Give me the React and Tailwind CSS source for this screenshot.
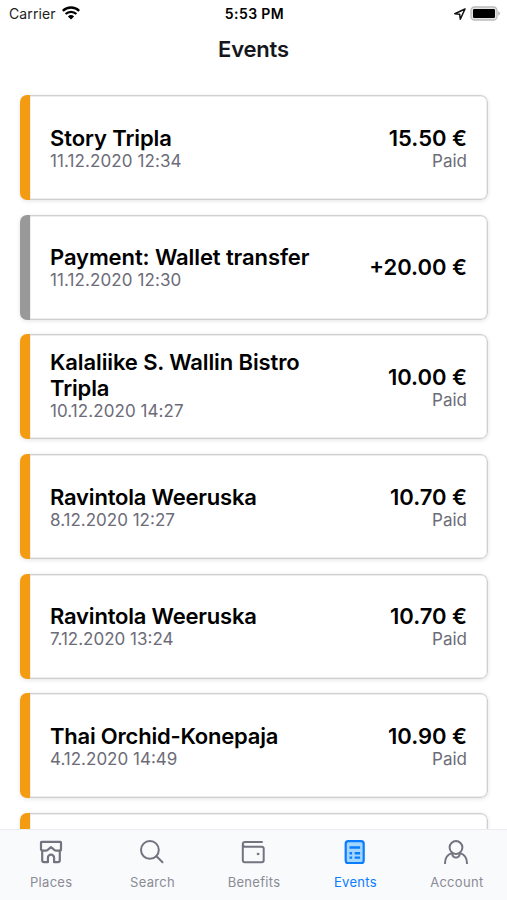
import React from 'react';
import clsx from 'clsx';

const events = [
  { id: 1, title: 'Story Tripla', date: '11.12.2020 12:34', amount: '15.50 €', status: 'Paid', tracking: 'tracking-[-0.1px]', dateTracking: 'tracking-[0.1px]' },
  { id: 2, title: 'Payment: Wallet transfer', date: '11.12.2020 12:30', amount: '+20.00 €', transfer: true, tracking: 'tracking-[-0.1px]', dateTracking: 'tracking-[0.1px]' },
  { id: 3, title: 'Kalaliike S. Wallin Bistro Tripla', date: '10.12.2020 14:27', amount: '10.00 €', status: 'Paid', tall: true, tracking: 'tracking-[-0.12px]', dateTracking: 'tracking-[0.07px]' },
  { id: 4, title: 'Ravintola Weeruska', date: '8.12.2020 12:27', amount: '10.70 €', status: 'Paid', tracking: 'tracking-[-0.2px]' },
  { id: 5, title: 'Ravintola Weeruska', date: '7.12.2020 13:24', amount: '10.70 €', status: 'Paid', tracking: 'tracking-[-0.2px]' },
  { id: 6, title: 'Thai Orchid-Konepaja', date: '4.12.2020 14:49', amount: '10.90 €', status: 'Paid', tracking: 'tracking-[-0.22px]' },
  { id: 7, title: '', date: '', amount: '' },
];

const PlacesIcon = () => (
  <svg className="h-6 w-6" viewBox="0 0 24 24" fill="none" stroke="currentColor" strokeWidth={2.2} strokeLinejoin="round" strokeLinecap="round">
    <path d="M2.600 1.800h18.800a.6.6 0 0 1 .6.6v6.800a1.500 1.500 0 0 1-1.500 1.500H17a2 2 0 0 1-1.400-.6L12 7.200l-3.600 2.900a2 2 0 0 1-1.400.6H3.500A1.500 1.500 0 0 1 2 9.200V2.400a.6.6 0 0 1 .6-.6z" />
    <path d="M3.200 10.700v9.600a1.900 1.900 0 0 0 1.900 1.900h3.800v-4.400a3.100 3.100 0 0 1 6.200 0v4.400h3.800a1.900 1.900 0 0 0 1.900-1.900v-9.600" />
  </svg>
);

const SearchIcon = () => (
  <svg className="h-6 w-6" viewBox="0 0 24 24" fill="none" stroke="currentColor" strokeWidth={2} strokeLinecap="round">
    <circle cx="9.900" cy="9.900" r="8.900" />
    <path d="M16.500 16.300l6 5.900" />
  </svg>
);

const BenefitsIcon = () => (
  <svg className="h-6 w-6" viewBox="0 0 24 24" fill="none" stroke="currentColor" strokeWidth={2} strokeLinecap="round" strokeLinejoin="round">
    <path d="M21 1.900H4.200a2.400 2.400 0 0 0 0 4.800h16.500a2 2 0 0 1 2 2V20.300a2 2 0 0 1-2 2H3.800a2 2 0 0 1-2-2V4.300" />
    <circle cx="17" cy="14" r="0.900" fill="currentColor" strokeWidth={1} />
  </svg>
);

const EventsIcon = () => (
  <svg className="h-6 w-6" viewBox="0 0 24 24" fill="none" stroke="currentColor" strokeWidth={2.2}>
    <rect x="2.700" y="1.200" width="18" height="22" rx="2.600" fill="#a3d6ff" />
    <path d="M6.500 7.500h10.600M6.500 13.300h2.600M11.700 13.300h5.400M6.500 17.600h2.600M11.700 17.600h5.400" strokeWidth={2.400} />
  </svg>
);

const AccountIcon = () => (
  <svg className="h-6 w-6" viewBox="0 0 24 24" fill="none" stroke="currentColor" strokeWidth={2} strokeLinecap="round">
    <circle cx="12" cy="7.500" r="6.400" />
    <path d="M1 23.300c0-5 2.500-8.900 7-10.200.4 2.800 2 4.500 4 4.500s3.600-1.700 4-4.500c4.500 1.300 7 5.200 7 10.200" />
  </svg>
);

const tabs = [
  { label: 'Places', Icon: PlacesIcon },
  { label: 'Search', Icon: SearchIcon },
  { label: 'Benefits', Icon: BenefitsIcon },
  { label: 'Events', Icon: EventsIcon, active: true },
  { label: 'Account', Icon: AccountIcon },
];

const StatusBar = () => (
  <div className="grid h-7 grid-cols-3 items-center pl-[9px] pr-[7px] text-[14px] leading-7 text-black">
    <div className="flex items-center gap-[6px]">
      <span className="tracking-[0.1px] text-[#222]">Carrier</span>
      <svg className="-mt-[2px] h-[14px] w-[18px]" viewBox="0 0 18 14" fill="none" stroke="black" strokeWidth={2.300}>
        <path d="M.800 4.800a11.800 11.800 0 0 1 16.400 0M3.600 8a7.700 7.700 0 0 1 10.800 0" />
        <path d="M9 13.600L5.900 10.400a4.500 4.500 0 0 1 6.200 0z" fill="black" stroke="none" />
      </svg>
    </div>
    <span className="text-center font-semibold tracking-[0.4px]">5:53 PM</span>
    <div className="flex items-center justify-end gap-[4px]">
      <svg className="-mt-px h-3 w-3" viewBox="0 0 12 12" fill="none" stroke="#111" strokeWidth={1.500} strokeLinejoin="round">
        <path d="M11 1L.800 5.700l4.900.600.600 4.900z" />
      </svg>
      <svg className="-mt-[2px] h-[15px] w-[30px]" viewBox="0 0 30 15">
        <rect x="1" y="1" width="26" height="13" rx="3.500" fill="#e4e4e4" stroke="#bbb" strokeWidth={1.300} />
        <rect x="3" y="3" width="22" height="9" rx="1.200" fill="#000" />
        <path d="M28.300 5.300c2 .700 2 3.700 0 4.400z" fill="#aaa" />
      </svg>
    </div>
  </div>
);

const EventCard = ({ event }) => (
  <div className="flex h-[105px] shrink-0 overflow-hidden rounded-[7px] bg-white shadow-[0_1px_4px_rgba(0,0,0,0.11)]">
    <div className={clsx('w-[10px] shrink-0', event.transfer ? 'bg-[#999999]' : 'bg-[#f39c12]')} />
    <div className="flex min-w-0 flex-1 items-center justify-between rounded-r-[7px] border border-l-0 border-[#d0d0d3] pl-5 pr-[20px] shadow-[inset_0_0_0_0.5px_#dcdcdf]">
      <div className={clsx('w-[270px] pt-px', event.tall && 'pb-[3px]')}>
        <h2 className={clsx('-mt-px text-[22px] font-semibold leading-[26px] text-black', event.tracking)}>{event.title}</h2>
        <p className={clsx('mt-px text-[17px] leading-[19px] text-[#6c6c78]', event.dateTracking)}>{event.date}</p>
      </div>
      <div className="whitespace-nowrap text-right">
        <p className="text-[22px] font-semibold leading-[26px] text-black">{event.amount}</p>
        {event.status && <p className="mt-px text-[17px] leading-[19px] text-[#6c6c78]">{event.status}</p>}
      </div>
    </div>
  </div>
);

const App = () => {
  return (
    <div className="flex h-[900px] w-[507px] flex-col overflow-hidden bg-white font-['Inter',sans-serif]">
      <StatusBar />
      <header className="flex h-[42px] shrink-0 justify-center text-[#16161d]">
        <h1 className="text-[22px] font-semibold leading-[42px] tracking-[-0.2px]">Events</h1>
      </header>

      <main className="flex min-h-0 flex-1 flex-col gap-[14.7px] overflow-hidden pl-5 pr-[19px] pt-[25px]">
        {events.map((event) => (
          <EventCard key={event.id} event={event} />
        ))}
      </main>

      {/* Tab bar */}
      <nav className="grid h-[71px] shrink-0 grid-cols-5 border-t border-[#ececee] bg-[#f8fafc]">
        {tabs.map(({ label, Icon, active }) => (
          <a key={label} className={clsx('flex flex-col items-center pt-[10px]', active ? 'text-[#0a7cff]' : 'text-[#747480]')}>
            <Icon />
            <span className={clsx('mt-[9px] pl-px text-[13px] leading-[18px] tracking-[0.3px]', !active && 'text-[#8b8b94]')}>{label}</span>
          </a>
        ))}
      </nav>
    </div>
  );
};

export default App;
